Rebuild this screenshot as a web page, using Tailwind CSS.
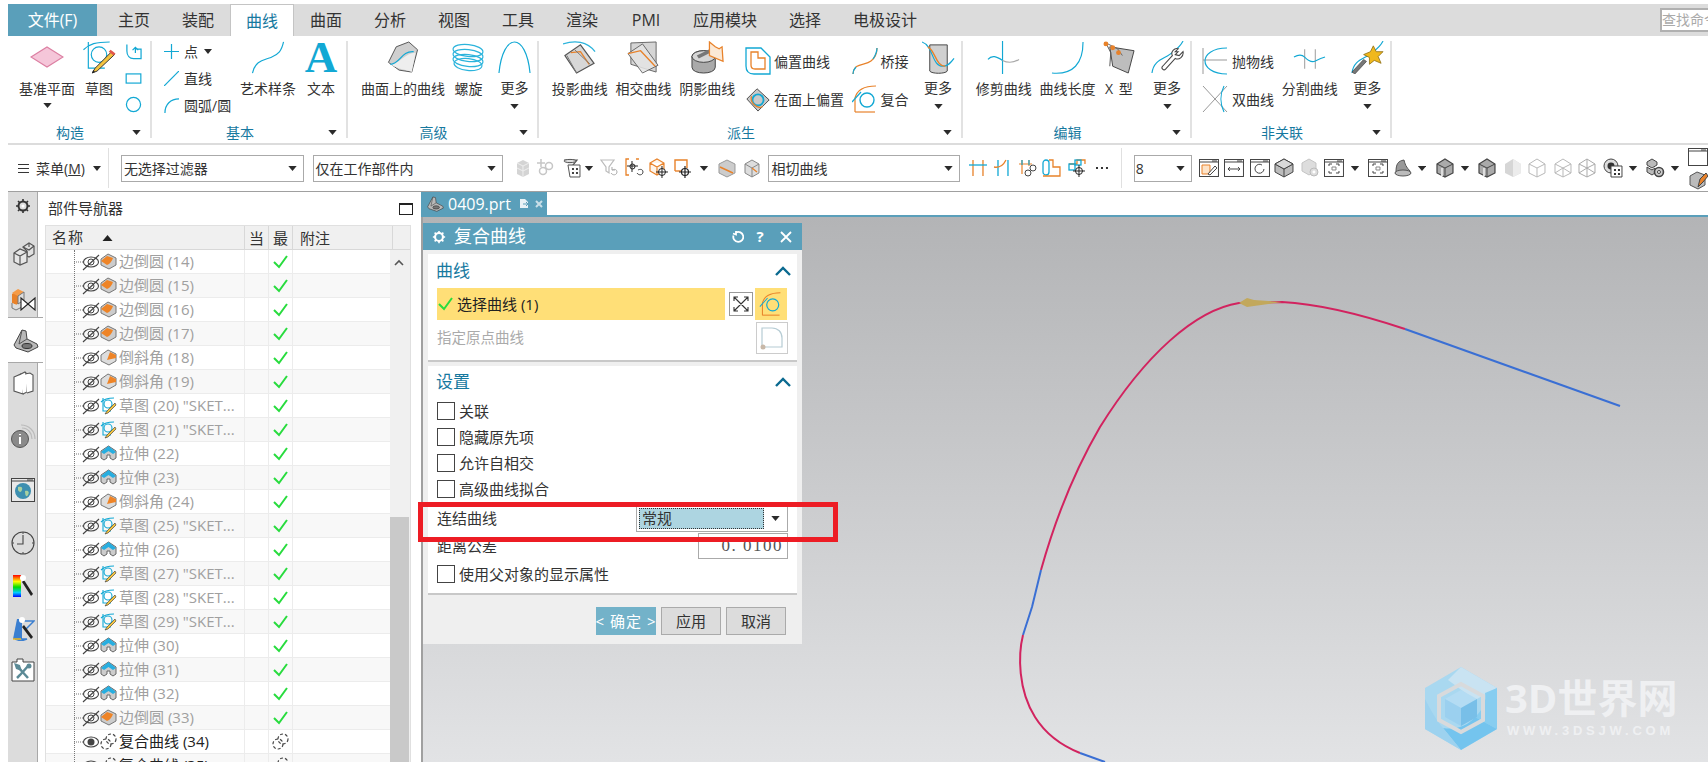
<!DOCTYPE html>
<html lang="zh">
<head>
<meta charset="UTF-8">
<title>复合曲线</title>
<script src="https://cdn.jsdelivr.net/npm/@tailwindcss/browser@4"></script>
</head>
<body class="font-['Open_Sans','Noto_Sans_CJK_SC',sans-serif] text-[#333]">

<!-- icon sheet -->
<svg class="absolute w-0 h-0">
  <defs><linearGradient id="rbw" x1="0" y1="0" x2="0" y2="1"><stop offset="0" stop-color="#f00"/><stop offset=".3" stop-color="#ff0"/><stop offset=".55" stop-color="#0d0"/><stop offset=".8" stop-color="#0cf"/><stop offset="1" stop-color="#00f"/></linearGradient></defs>
  <symbol id="caret" viewBox="0 0 10 6"><path d="M0 0h10L5 6z" fill="#2b2b2b"/></symbol>
  <symbol id="plane" viewBox="0 0 34 22"><path d="M1 11 17 1l16 10-16 10z" fill="#f5c6d9" stroke="#dc7fa2" stroke-width="1.2"/></symbol>
  <symbol id="sketch" viewBox="0 0 34 34"><g fill="none" stroke="#12a8d4" stroke-width="1.2"><path d="M1 9C7 3 14 1 28 1"/><path d="M6 1v27h17"/><circle cx="17" cy="14" r="8"/></g><path d="M30 11 13 28l-3 5 5-2 18-17z" fill="#f4c33f" stroke="#333" stroke-width="1"/><path d="m29 9 5 4-2 2-5-4z" fill="#e2574c"/><path d="m10 33 1-3 2 2z" fill="#222"/></symbol>
  <symbol id="chamfer-sm" viewBox="0 0 18 18"><g fill="none" stroke="#12a8d4" stroke-width="1.3"><path d="M2 1v7c0 5 3 8 7 8h8V6h-5"/><path d="m8 7 3-3 3 3M11 4v6"/></g></symbol>
  <symbol id="rect" viewBox="0 0 18 12"><rect x="1" y="1" width="16" height="10" fill="none" stroke="#12a8d4" stroke-width="1.3"/></symbol>
  <symbol id="circle" viewBox="0 0 18 18"><circle cx="9" cy="9" r="7.5" fill="none" stroke="#12a8d4" stroke-width="1.3"/></symbol>
  <symbol id="plus" viewBox="0 0 16 16"><path d="M8 0v16M0 8h16" stroke="#12a8d4" stroke-width="1.3"/></symbol>
  <symbol id="line" viewBox="0 0 16 16"><path d="M0 16 16 0" stroke="#12a8d4" stroke-width="1.3"/></symbol>
  <symbol id="arc" viewBox="0 0 16 16"><path d="M1 16C1 7 7 1 16 1" fill="none" stroke="#12a8d4" stroke-width="1.3"/></symbol>
  <symbol id="spline" viewBox="0 0 34 34"><path d="M1 33C4 20 12 20 20 17S31 10 33 1" fill="none" stroke="#12a8d4" stroke-width="1.2"/></symbol>
  <symbol id="surf-curve" viewBox="0 0 32 34"><path d="M9 6 22 1l9 8-6 23-13-2-11-8z" fill="#cfcfcf" stroke="#555"/><path d="M3 24c9 6 16 5 22 8l4-20C18 12 12 24 3 24z" fill="#eee"/><path d="M3 24c10 0 11-14 24-13" fill="none" stroke="#12a8d4" stroke-width="1.3"/></symbol>
  <symbol id="helix" viewBox="0 0 32 32"><g fill="none" stroke="#2cb4dc" stroke-width="1.2"><ellipse cx="16" cy="9" rx="15" ry="6" transform="rotate(6 16 9)"/><ellipse cx="16" cy="14" rx="15" ry="6" transform="rotate(6 16 14)"/><ellipse cx="16" cy="19" rx="15" ry="6" transform="rotate(6 16 19)"/><ellipse cx="16" cy="23" rx="14" ry="6" transform="rotate(6 16 23)"/></g></symbol>
  <symbol id="parab" viewBox="0 0 34 34"><path d="M1 33C3 12 10 1 17 1s14 11 16 32" fill="none" stroke="#12a8d4" stroke-width="1.2"/></symbol>
  <symbol id="project" viewBox="0 0 34 34"><path d="M0 3c12-4 25-3 33 8" fill="none" stroke="#2cb4dc" stroke-width="1.3"/><path d="M2 15 18 4l14 19-18 10z" fill="#d7d7d7" stroke="#555" stroke-width="1.2"/><path d="M8 12 18 11l9 13" fill="none" stroke="#e8822a" stroke-width="1.4"/><path d="m4 15 10 18M12 9l16 15" stroke="#777" fill="none"/></symbol>
  <symbol id="intersect" viewBox="0 0 34 34"><path d="M4 2 30 1v31L4 24z" fill="#d5d5d5" stroke="#666"/><path d="M1 13 16 3l16 22-16 8z" fill="#e5e5e5" stroke="#555" opacity=".85"/><path d="M1 13 14 10l15 16" fill="none" stroke="#e8822a" stroke-width="1.4"/></symbol>
  <symbol id="shadow" viewBox="0 0 34 34"><ellipse cx="13" cy="16" rx="12" ry="6" fill="#cfcfcf" stroke="#444"/><path d="M1 16v11c0 8 24 8 24 0V16" fill="#aaa" stroke="#444"/><ellipse cx="13" cy="16" rx="12" ry="6" fill="#d6d6d6" stroke="#444"/><path d="m6 15 14-7 2 3-14 7z" fill="#777"/><path d="M19 9V1l6 5 4 2 3-2 1 15-14-6z" fill="#fbe9d6" stroke="#e8822a" stroke-width="1.3"/></symbol>
  <symbol id="offset" viewBox="0 0 26 28"><g fill="none" stroke-width="1.3"><path d="M1 1h15l9 9v17H9c-5 0-8-3-8-8z" stroke="#12a8d4"/><path d="M6 5h7l0 6 7 0v11H10c-3 0-4-1-4-4z" stroke="#e8822a"/></g></symbol>
  <symbol id="offset-face" viewBox="0 0 26 28"><path d="M1 14 12 3l13 12-12 12z" fill="#c9c9c9" stroke="#444"/><circle cx="13" cy="15" r="6" fill="none" stroke="#12a8d4" stroke-width="2"/><path d="M6 11c-2 6 6 15 12 11" fill="none" stroke="#e8822a" stroke-width="1.4"/></symbol>
  <symbol id="bridge" viewBox="0 0 26 28"><path d="M1 27c1-12 12-8 18-13 4-3 6-8 6-13" fill="none" stroke="#e8822a" stroke-width="1.2"/><path d="M1 27c0-3 1-5 3-7M21 12c2-3 4-7 4-11" fill="none" stroke="#12a8d4" stroke-width="1.2"/></symbol>
  <symbol id="composite" viewBox="0 0 26 28"><g fill="none" stroke-width="1.2"><path d="M3 27V13C5 5 13 1 24 1" stroke="#e8822a"/><path d="M3 27h20" stroke="#e8822a"/><path d="M0 17 9 7" stroke="#12a8d4"/><circle cx="15" cy="15" r="7" stroke="#12a8d4" stroke-width="1.4"/></g></symbol>
  <symbol id="more-derive" viewBox="0 0 34 34"><path d="M8 4h18v27c-2 3-16 3-18 0z" fill="#d0d0d0" stroke="#444"/><path d="M0 1c12 4 10 26 22 25 5 0 8-4 11-8" fill="none" stroke="#12a8d4" stroke-width="1.2"/><path d="M6 6c8 4 8 20 18 20" fill="none" stroke="#e8822a" stroke-width="1.4"/></symbol>
  <symbol id="trim" viewBox="0 0 34 34"><path d="M16 0v34" stroke="#12a8d4" stroke-width="1.2"/><path d="M1 19c4-5 9-3 15 1" fill="none" stroke="#12a8d4" stroke-width="1.2"/><path d="M16 20c6 3 12 2 17-1" fill="none" stroke="#aaa" stroke-width="1.2"/></symbol>
  <symbol id="length" viewBox="0 0 34 34"><path d="M1 33c22 2 32-10 32-32" fill="none" stroke="#12a8d4" stroke-width="1.2"/></symbol>
  <symbol id="xtype" viewBox="0 0 34 34"><path d="M7 6 32 10 26 33 10 26z" fill="#bdbdbd" stroke="#444"/><path d="M3 2 8 12 7 26" fill="none" stroke="#555"/><path d="m3 2 12 6 5 7" fill="none" stroke="#666"/><circle cx="3" cy="3" r="2.5" fill="#e8822a"/><circle cx="10" cy="7" r="2.5" fill="#e8822a"/><circle cx="16" cy="12" r="2.5" fill="#e8822a"/></symbol>
  <symbol id="wrench" viewBox="0 0 34 34"><path d="M1 33c2-15 14-14 22-22 4-3 8-7 10-11" fill="none" stroke="#12a8d4" stroke-width="1.2"/><path d="m28 11-3 3 4 1 4-4c1 5-4 9-8 7L15 29c-2 2-5-1-3-3l10-11c-2-4 2-8 6-7l-3 3z" fill="#fff" stroke="#444" stroke-width="1.1"/></symbol>
  <symbol id="parabola" viewBox="0 0 26 28"><path d="M1 1v26" stroke="#999"/><path d="M1 13h24" stroke="#999"/><path d="M25 1C10 1 3 8 3 14s7 13 22 13" fill="none" stroke="#12a8d4" stroke-width="1.2"/></symbol>
  <symbol id="hyperbola" viewBox="0 0 26 28"><path d="m1 1 24 26M1 27 25 1" stroke="#999"/><path d="M22 1c-4 8-4 18 0 26" fill="none" stroke="#12a8d4" stroke-width="1.2"/></symbol>
  <symbol id="split" viewBox="0 0 34 20"><path d="M12 0v20M23 0v20" stroke="#aaa" stroke-width="1.2"/><path d="M1 8c5-3 8-3 11 0s7 6 11 4 6-3 10-4" fill="none" stroke="#12a8d4" stroke-width="1.2"/></symbol>
  <symbol id="wand" viewBox="0 0 34 34"><path d="M1 33c2-15 14-14 22-22 4-3 8-7 10-11" fill="none" stroke="#12a8d4" stroke-width="1.2"/><path d="m23 5 3 6 7 0-5 5 3 7-7-3-5 4 0-7-6-3 7-3z" fill="#f0b81d" stroke="#8a6a10" stroke-width=".8"/><path d="m16 21-3-2-12 13 3 2z" fill="#777" stroke="#333" stroke-width=".6"/></symbol>

  <symbol id="t-gcube" viewBox="0 0 20 20"><path d="M4 5 10 2l6 3v11l-6 3-6-3z" fill="#d4d4d4"/><path d="m4 5 6 3 6-3M10 8v11M4 10l6 3 6-3" fill="none" stroke="#eee"/></symbol>
  <symbol id="t-glink" viewBox="0 0 20 20"><g fill="none" stroke="#c6c6c6" stroke-width="1.5"><circle cx="7" cy="13" r="3.5"/><circle cx="13" cy="8" r="3.5"/><path d="M5 1v8M1 5h8"/></g></symbol>
  <symbol id="t-filter" viewBox="0 0 20 20"><path d="M2 2h13l-4 5v6" fill="#eee" stroke="#555" stroke-width="1.2"/><ellipse cx="8" cy="3" rx="6" ry="1.6" fill="#ddd" stroke="#555"/><path d="M6 7h12v12H8z" fill="#fff" stroke="#555"/><path d="M10 10h2v2h-2zm4 0h2v2h-2zm-4 4h2v2h-2zm4 0h2v2h-2z" fill="#444"/></symbol>
  <symbol id="t-filter2" viewBox="0 0 20 20"><path d="M2 2h13L10 9v6L7 13V9z" fill="#fff" stroke="#bbb" stroke-width="1.2"/><path d="M12 15c2 3 6 2 6-1s-3-3-5-2m0 0v-3m0 3h3" fill="none" stroke="#aaa"/></symbol>
  <symbol id="t-snap1" viewBox="0 0 20 20"><path d="M4 1H1v16h3M11 1h3" fill="none" stroke="#e8822a" stroke-width="1.3"/><path d="M7 3v11M2 8h11" stroke="#222"/><circle cx="7.500" cy="8.500" r="2.500" fill="none" stroke="#222"/><path d="M12 15c2 3 6 2 6-1s-3-3-5-2" fill="none" stroke="#444"/></symbol>
  <symbol id="t-snap2" viewBox="0 0 20 20"><path d="m1 5 7-4 7 4v8l-7 4-7-4zM1 5l7 4 7-4M8 9v8" fill="#fdf4ea" stroke="#e8822a" stroke-width="1.2"/><circle cx="13" cy="14" r="3.500" fill="#fff" stroke="#222"/><path d="M13 8v12M7 14h12" stroke="#222"/></symbol>
  <symbol id="t-snap3" viewBox="0 0 20 20"><path d="M2 13V2h12v8" fill="none" stroke="#e8822a" stroke-width="1.4"/><path d="M2 13h6" stroke="#e8822a" stroke-width="1.4"/><circle cx="12" cy="14" r="3.500" fill="none" stroke="#222" stroke-width="1.2"/><path d="M12 8v12M6 14h12" stroke="#222" stroke-width="1.2"/></symbol>
  <symbol id="t-cubeor" viewBox="0 0 20 20"><path d="m2 6 8-4 8 4v9l-8 4-8-4z" fill="#ccc" stroke="#999"/><path d="m3 9 13 6" stroke="#e8822a" stroke-width="1.5"/></symbol>
  <symbol id="t-cubewf" viewBox="0 0 20 20"><path d="m3 6 7-4 7 4v9l-7 4-7-4z" fill="#ddd" stroke="#888"/><path d="m3 6 7 4 7-4M10 10v9" fill="none" stroke="#888"/><path d="m10 10 5 4" stroke="#e8822a" stroke-width="1.3"/></symbol>
  <symbol id="t-ts1" viewBox="0 0 20 20"><path d="M5 2v16M15 2v16" stroke="#e8822a" stroke-width="1.3"/><path d="M1 7h18" stroke="#12a8d4" stroke-width="1.3"/></symbol>
  <symbol id="t-ts2" viewBox="0 0 20 20"><path d="M5 2v16M15 2v16" stroke="#12a8d4" stroke-width="1.3"/><path d="M1 9c5 1 9-1 12-7" fill="none" stroke="#e8822a" stroke-width="1.3"/></symbol>
  <symbol id="t-ts3" viewBox="0 0 20 20"><path d="M4 2v14M11 2v6M1 6h13" fill="none" stroke="#e8822a" stroke-width="1.2"/><path d="M4 2v5M11 2v5" stroke="#12a8d4" stroke-width="1.2"/><circle cx="10" cy="15" r="3" fill="none" stroke="#444"/><circle cx="15" cy="10" r="3" fill="none" stroke="#444"/></symbol>
  <symbol id="t-ts4" viewBox="0 0 20 20"><rect x="1" y="2" width="6" height="15" rx="3" fill="none" stroke="#12a8d4" stroke-width="1.3"/><path d="M7 2h4v7h7v9H1" fill="none" stroke="#e8822a" stroke-width="1.3"/></symbol>
  <symbol id="t-ts5" viewBox="0 0 20 20"><path d="M1 6h8V2h8v4" fill="none" stroke="#e8822a" stroke-width="1.3"/><rect x="7" y="2" width="6" height="5" fill="none" stroke="#12a8d4" stroke-width="1.3"/><rect x="1" y="6" width="6" height="6" fill="none" stroke="#12a8d4" stroke-width="1.3"/><circle cx="11" cy="13" r="3.500" fill="none" stroke="#222"/><path d="M11 7v12M5 13h12" stroke="#222"/></symbol>
  <symbol id="v-win1" viewBox="0 0 20 20"><rect x=".5" y="1.500" width="19" height="17" fill="#fff" stroke="#444"/><path d="M.5 4h19M13 3h5" stroke="#444"/><path d="M3 7h8v9H3z" fill="#fde3c8" stroke="#e8822a"/><path d="m9 16 7-8 2 2-7 7z" fill="#fff" stroke="#444"/></symbol>
  <symbol id="v-win2" viewBox="0 0 20 20"><rect x=".5" y="1.500" width="19" height="17" fill="#fff" stroke="#444"/><path d="M.5 4h19M13 3h5M4 11h12M4 11l2-2M4 11l2 2M16 11l-2-2M16 11l-2 2" fill="none" stroke="#444"/></symbol>
  <symbol id="v-win3" viewBox="0 0 20 20"><rect x=".5" y="1.500" width="19" height="17" fill="#fff" stroke="#444"/><path d="M.5 4h19M13 3h5M14 11a4.500 4.500 0 1 1-2-4" fill="none" stroke="#444"/></symbol>
  <symbol id="v-cube" viewBox="0 0 20 20"><path d="m1 6 9-5 9 5v8l-9 5-9-5z" fill="#bcbcbc" stroke="#444"/><path d="m1 6 9 5 9-5M10 11v8" fill="none" stroke="#444"/><path d="m1 6 9-5 9 5-9 5z" fill="#d8d8d8" stroke="#444"/></symbol>
  <symbol id="v-gray" viewBox="0 0 20 20"><path d="m2 5 7-4 7 4v8l-7 4-7-4z" fill="#ddd" stroke="#c4c4c4"/><circle cx="14" cy="14" r="4" fill="#ddd" stroke="#bbb"/><circle cx="14" cy="14" r="1.500" fill="#fff"/></symbol>
  <symbol id="v-fit" viewBox="0 0 20 20"><rect x=".5" y="1.500" width="19" height="17" fill="#fff" stroke="#444"/><path d="M.5 4h19M13 3h5M5 8V6h3M15 8V6h-3M5 13v2h3M15 13v2h-3" fill="none" stroke="#444"/><path d="M8 9h4v3H8z" fill="none" stroke="#888"/></symbol>
  <symbol id="v-shade" viewBox="0 0 20 20"><path d="M4 14C4 6 6 3 12 2c1 4 2 7 6 11v3H4z" fill="#999" stroke="#555"/><ellipse cx="11" cy="15" rx="8" ry="3" fill="#bbb" stroke="#555"/></symbol>
  <symbol id="v-cyl" viewBox="0 0 20 20"><path d="m2 6 8-5 8 5v9l-8 4-8-4z" fill="#aaa" stroke="#444" stroke-width="1.2"/><path d="m2 6 8 4 8-4M10 10v9" fill="none" stroke="#444"/><path d="M7 10v8" stroke="#ddd" stroke-width="2"/></symbol>
  <symbol id="v-smooth" viewBox="0 0 20 20"><path d="m2 6 8-5 8 5v9l-8 4-8-4z" fill="#d6d6d6"/><path d="m10 1 8 5v9l-8 4z" fill="#ececec"/></symbol>
  <symbol id="v-wire1" viewBox="0 0 20 20"><path d="m2 6 8-5 8 5v9l-8 4-8-4zM2 6l8 4 8-4M10 10v9" fill="#fff" stroke="#b8b8b8"/></symbol>
  <symbol id="v-wire2" viewBox="0 0 20 20"><path d="m2 6 8-5 8 5v9l-8 4-8-4zM2 6l8 4 8-4M10 10v9M2 15l8-5 8 5" fill="#fff" stroke="#b8b8b8"/></symbol>
  <symbol id="v-wire3" viewBox="0 0 20 20"><path d="m2 6 8-5 8 5v9l-8 4-8-4zM2 6l8 4 8-4M10 10v9M2 15l8-5 8 5M10 1v9" fill="#fff" stroke="#aaa"/></symbol>
  <symbol id="v-eyes" viewBox="0 0 20 20"><circle cx="8" cy="8" r="7" fill="#ddd" stroke="#444"/><circle cx="8" cy="8" r="3.500" fill="#333"/><path d="M8 8h11v11H8z" fill="#fff" stroke="#444"/><path d="M11 11h2v2h-2zm4 0h2v2h-2zm-4 4h2v2h-2zm4 0h2v2h-2z" fill="#333"/></symbol>
  <symbol id="v-gear" viewBox="0 0 20 20"><path d="m2 4 5-3 5 3v3l-5 3-5-3zM2 9l5 3 3-2v5l-3 2-5-3z" fill="#bbb" stroke="#444"/><circle cx="14" cy="14" r="4.500" fill="#ccc" stroke="#444" stroke-width="1.600"/><circle cx="14" cy="14" r="1.500" fill="#fff" stroke="#444"/></symbol>
  <symbol id="v-win0" viewBox="0 0 20 20"><rect x=".5" y="1.500" width="19" height="17" fill="#fff" stroke="#444"/><path d="M.5 4h19M13 3h5" stroke="#444"/></symbol>
  <symbol id="v-pen" viewBox="0 0 20 20"><path d="m2 6 7-4 8 3v10l-7 4-8-4z" fill="#bbb" stroke="#555"/><path d="m10 17 2-8 6-6 2 3-5 6z" fill="#e8822a" stroke="#444"/></symbol>

  <symbol id="r-gear" viewBox="0 0 16 16"><circle cx="8" cy="8" r="4.500" fill="none" stroke="#333" stroke-width="2"/><circle cx="8" cy="8" r="1.500" fill="#fff"/><path d="M8 1v2M8 13v2M1 8h2M13 8h2M3 3l1.500 1.500M11.500 11.500 13 13M3 13l1.500-1.500M11.500 4.500 13 3" stroke="#333" stroke-width="1.600"/></symbol>
  <symbol id="r-parts" viewBox="0 0 24 24"><path d="M12 5 18 1l5 3v8l-5 3-2-1V9z" fill="#e0e0e0" stroke="#555" stroke-width="1.200"/><path d="M3 11 9 7l7 3v10l-7 3-6-3z" fill="#e6e6e6" stroke="#555" stroke-width="1.200"/><path d="m3 11 6 3 7-4M9 14v9M18 1v4M12 5l6 3 5-4" fill="none" stroke="#555" stroke-width="1.200"/></symbol>
  <symbol id="r-asm" viewBox="0 0 26 26"><path d="M2 9 9 5v13l-3 2-4-2z" fill="#e8822a"/><path d="m2 8 6-4 6 3-6 4z" fill="#f59b47"/><path d="m8 11 6-4v8l-6 4z" fill="#ddd" stroke="#777"/><path d="M2 18v5l4 2 6-3" fill="#ddd" stroke="#777"/><path d="M11 13v12l14-12v12z" fill="#fff" stroke="#222" stroke-width="1.100"/></symbol>
  <symbol id="r-part" viewBox="0 0 26 26"><path d="M1 18 9 3l4 1 1 8 10 5 1 3-10 5-12-4z" fill="#b8b8b8" stroke="#444"/><path d="m9 3-3 14 8-5" fill="none" stroke="#555"/><ellipse cx="14" cy="19" rx="5" ry="2.500" fill="#777" stroke="#333"/></symbol>
  <symbol id="r-books" viewBox="0 0 24 24"><path d="M3 6 10 3l2 2v18l-9-3z" fill="#fff" stroke="#555" stroke-width="1.100"/><path d="m8 4 6-3 2 2v18l-4 2" fill="#fff" stroke="#555" stroke-width="1.100"/><path d="m14 3 5-1 3 2v16l-6 2" fill="#fff" stroke="#555" stroke-width="1.100"/></symbol>
  <symbol id="r-info" viewBox="0 0 26 26"><circle cx="10" cy="16" r="8.500" fill="#8a8a8a" stroke="#555"/><path d="M10 11v1M10 14v7" stroke="#fff" stroke-width="2"/><path d="M11 2c8 0 14 6 14 14M12 5c6 0 10 5 10 11" fill="none" stroke="#bbb" stroke-width="1.200"/></symbol>
  <symbol id="r-globe" viewBox="0 0 24 24"><rect x=".5" y=".5" width="23" height="23" fill="#e9e9e9" stroke="#444"/><path d="M.5 3h23M16 2h6" stroke="#444"/><circle cx="12" cy="13" r="8" fill="#3d8fb0"/><path d="M7 9c3-1 5 0 4 3s-3 2-4 0zM14 13c3-1 5 1 3 4s-3 0-3-4z" fill="#a8d0a0"/></symbol>
  <symbol id="r-clock" viewBox="0 0 24 24"><circle cx="12" cy="12" r="11" fill="none" stroke="#444" stroke-width="1.100"/><path d="M12 4v9H6" fill="none" stroke="#444" stroke-width="1.100"/><path d="M12 1v2M12 21v2M1 12h2M21 12h2" stroke="#444"/></symbol>
  <symbol id="r-tint" viewBox="0 0 24 24"><rect x="2" y="1" width="8" height="22" fill="url(#rbw)"/><path d="m13 6 9 14-2 2-9-14z" fill="#222"/><circle cx="12" cy="4" r="3" fill="#fff"/></symbol>
  <symbol id="r-mesh" viewBox="0 0 24 24"><path d="M2 22 6 2h5v20z" fill="#3b7fd0"/><path d="M4 22h12l-6 2zM11 4h12l-8 8" fill="none" stroke="#3b7fd0" stroke-width="1.500"/><path d="m13 8 9 12-2 2-9-12z" fill="#222"/><circle cx="11" cy="3" r="3" fill="#fff"/><path d="M2 22h8" stroke="#f0b81d" stroke-width="1.500"/></symbol>
  <symbol id="r-tools" viewBox="0 0 24 24"><path d="M1 4h5V1h6v3h11v19H1z" fill="#fff" stroke="#444"/><path d="m7 9 10 11" stroke="#5b8a96" stroke-width="2.500"/><path d="m5 7 3 1 1 3-3-1zM18 7l-9 10-3 3" fill="none" stroke="#5b8a96" stroke-width="2.500"/><circle cx="18" cy="8" r="2.500" fill="#5b8a96"/></symbol>

  <symbol id="eye-off" viewBox="0 0 26 18"><path d="M0 9h9" stroke="#777" stroke-dasharray="1 1"/><ellipse cx="17" cy="9" rx="7.500" ry="5" fill="none" stroke="#444" stroke-width="1.100"/><circle cx="17" cy="9" r="3" fill="none" stroke="#444"/><path d="M9 17 25 2" stroke="#444" stroke-width="1.100"/></symbol>
  <symbol id="eye-on" viewBox="0 0 26 18"><path d="M0 9h9" stroke="#777" stroke-dasharray="1 1"/><ellipse cx="17" cy="9" rx="7.500" ry="5" fill="none" stroke="#444" stroke-width="1.100"/><circle cx="17" cy="9" r="3.500" fill="#444"/></symbol>
  <symbol id="fillet" viewBox="0 0 17 17"><path d="m1 6 7-5 8 4v7l-7 4-8-4z" fill="#ccc" stroke="#777"/><path d="m1 8 6-5 6 2c-1 3-3 6-6 7z" fill="#ee8427"/></symbol>
  <symbol id="chamfer" viewBox="0 0 17 17"><path d="m1 6 7-5 8 4v7l-7 4-8-4z" fill="#ddd" stroke="#777"/><path d="m7 11 3-8 6 3v3z" fill="#ee8427"/></symbol>
  <symbol id="mini-sketch" viewBox="0 0 17 18"><g fill="none" stroke="#12a8d4" stroke-width="1.100"><path d="M1 5c3-3 6-4 13-4"/><path d="M3 1v13h8"/><circle cx="8" cy="7" r="4"/></g><path d="m15 6-8 8-2 3 3-1 8-8z" fill="#f4c33f" stroke="#333" stroke-width=".6"/></symbol>
  <symbol id="extrude" viewBox="0 0 17 17"><path d="m1 6 7.500-5L16 6v7l-3 2-3-2v-3H7v3l-3 2-3-2z" fill="#ccc" stroke="#666"/><path d="m1 7 7.500-6L16 7l-3 2-4.500-3L4 9z" fill="#27aee0"/></symbol>
  <symbol id="broken" viewBox="0 0 17 17"><g fill="none" stroke="#444" stroke-width="1.200" stroke-dasharray="3 2"><circle cx="6" cy="11" r="5"/><circle cx="11" cy="6" r="5"/></g></symbol>
  <symbol id="ok" viewBox="0 0 15 14"><path d="m1 7 5 5L14 1" fill="none" stroke="#28dc3e" stroke-width="2"/></symbol>
  <symbol id="chev" viewBox="0 0 16 10"><path d="m1 9 7-7 7 7" fill="none" stroke="#0b6a90" stroke-width="2.400"/></symbol>
</svg>

<div class="relative w-[1708px] h-[762px] overflow-hidden bg-white flex flex-col">

  <!-- tabs -->
  <div class="flex h-[32px] mt-[4px] ml-[8px] bg-[#dcdcdc] text-[16px] shrink-0">
    <div class="w-[89px] bg-[#5a9fba] text-white flex items-center justify-center">文件(F)</div>
    <div class="w-[5px]"></div>
    <div class="w-[64px] flex items-center justify-center">主页</div>
    <div class="w-[64px] flex items-center justify-center">装配</div>
    <div class="w-[64px] flex items-center justify-center bg-white border-t border-x border-[#c4c4c4] text-[#17799f]">曲线</div>
    <div class="w-[64px] flex items-center justify-center">曲面</div>
    <div class="w-[64px] flex items-center justify-center">分析</div>
    <div class="w-[64px] flex items-center justify-center">视图</div>
    <div class="w-[64px] flex items-center justify-center">工具</div>
    <div class="w-[64px] flex items-center justify-center">渲染</div>
    <div class="w-[64px] flex items-center justify-center">PMI</div>
    <div class="w-[94px] flex items-center justify-center">应用模块</div>
    <div class="w-[66px] flex items-center justify-center">选择</div>
    <div class="w-[94px] flex items-center justify-center">电极设计</div>
    <div class="ml-auto mt-[4px] w-[48px] h-[24px] bg-white border-2 border-r-0 border-[#b0b0b0] text-[#aaa] text-[14px] leading-[20px] whitespace-nowrap overflow-hidden">查找命令</div>
  </div>

  <!-- ribbon -->
  <div class="flex h-[109px] ml-[8px] pt-[5px] border-b-2 border-[#dcdcdc] shrink-0 text-[14px]">

    <div class="w-[144px] h-[97px] flex flex-col border-r-2 border-[#e2e2e2]">
      <div class="h-[86px] shrink-0 flex pl-[7px]">
        <div class="w-[64px] flex flex-col items-center"><svg class="w-[34px] h-[22px] mt-[5px] mb-[5px]"><use href="#plane"/></svg><span class="mt-[6px] h-[20px] leading-[20px]">基准平面</span><svg class="w-[9px] h-[5px] mt-[4px]"><use href="#caret"/></svg></div>
        <div class="w-[40px] flex flex-col items-center"><svg class="w-[34px] h-[33px]"><use href="#sketch"/></svg><span class="mt-[5px] h-[20px] leading-[20px]">草图</span></div>
        <div class="w-[28px] flex flex-col items-center pt-[2px]"><svg class="w-[17px] h-[18px]"><use href="#chamfer-sm"/></svg><svg class="w-[17px] h-[11px] mt-[12px]"><use href="#rect"/></svg><svg class="w-[17px] h-[17px] mt-[12px]"><use href="#circle"/></svg></div>
      </div>
      <div class="h-[11px] flex items-center"><span class="flex-1 text-center text-[#17799f] leading-none">构造</span><svg class="w-[9px] h-[5px] mr-[9px]"><use href="#caret"/></svg></div>
    </div>

    <div class="w-[196px] h-[97px] flex flex-col border-r-2 border-[#e2e2e2]">
      <div class="h-[86px] shrink-0 flex">
        <div class="w-[84px] pl-[12px] -mt-[3px] flex flex-col">
          <div class="h-[27px] flex items-center"><svg class="w-[15px] h-[15px]"><use href="#plus"/></svg><span class="ml-[5px]">点</span><svg class="w-[8px] h-[5px] ml-[6px]"><use href="#caret"/></svg></div>
          <div class="h-[27px] flex items-center"><svg class="w-[15px] h-[15px]"><use href="#line"/></svg><span class="ml-[5px]">直线</span></div>
          <div class="h-[27px] flex items-center"><svg class="w-[15px] h-[15px]"><use href="#arc"/></svg><span class="ml-[5px]">圆弧/圆</span></div>
        </div>
        <div class="w-[64px] flex flex-col items-center"><svg class="w-[34px] h-[33px]"><use href="#spline"/></svg><span class="mt-[5px] h-[20px] leading-[20px]">艺术样条</span></div>
        <div class="w-[42px] flex flex-col items-center"><span class="h-[33px] text-[45px] leading-[33px] font-bold font-['Liberation_Serif'] text-[#12a8d4]">A</span><span class="mt-[5px] h-[20px] leading-[20px]">文本</span></div>
      </div>
      <div class="h-[11px] flex items-center"><span class="flex-1 text-center text-[#17799f] leading-none">基本</span><svg class="w-[9px] h-[5px] mr-[9px]"><use href="#caret"/></svg></div>
    </div>

    <div class="w-[191px] h-[97px] flex flex-col border-r-2 border-[#e2e2e2]">
      <div class="h-[86px] shrink-0 flex pl-[13px]">
        <div class="w-[84px] flex flex-col items-center"><svg class="w-[32px] h-[33px]"><use href="#surf-curve"/></svg><span class="mt-[5px] h-[20px] leading-[20px] whitespace-nowrap">曲面上的曲线</span></div>
        <div class="w-[48px] flex flex-col items-center"><svg class="w-[32px] h-[33px]"><use href="#helix"/></svg><span class="mt-[5px] h-[20px] leading-[20px]">螺旋</span></div>
        <div class="w-[46px] flex flex-col items-center"><svg class="w-[33px] h-[33px]"><use href="#parab"/></svg><span class="mt-[4px] h-[20px] leading-[20px]">更多</span><svg class="w-[9px] h-[5px] mt-[6px]"><use href="#caret"/></svg></div>
      </div>
      <div class="h-[11px] flex items-center"><span class="flex-1 text-center text-[#17799f] leading-none">高级</span><svg class="w-[9px] h-[5px] mr-[9px]"><use href="#caret"/></svg></div>
    </div>

    <div class="w-[424px] h-[97px] flex flex-col border-r-2 border-[#e2e2e2]">
      <div class="h-[86px] shrink-0 flex pl-[9px]">
        <div class="w-[64px] flex flex-col items-center"><svg class="w-[33px] h-[33px]"><use href="#project"/></svg><span class="mt-[5px] h-[20px] leading-[20px]">投影曲线</span></div>
        <div class="w-[64px] flex flex-col items-center"><svg class="w-[33px] h-[33px]"><use href="#intersect"/></svg><span class="mt-[5px] h-[20px] leading-[20px]">相交曲线</span></div>
        <div class="w-[64px] flex flex-col items-center"><svg class="w-[33px] h-[33px]"><use href="#shadow"/></svg><span class="mt-[5px] h-[20px] leading-[20px]">阴影曲线</span></div>
        <div class="w-[110px] pl-[6px] pt-[4px] flex flex-col">
          <div class="h-[32px] flex items-center"><svg class="w-[26px] h-[28px]"><use href="#offset"/></svg><span class="ml-[3px] whitespace-nowrap">偏置曲线</span></div>
          <div class="h-[28px] mt-[8px] flex items-center"><svg class="w-[26px] h-[26px]"><use href="#offset-face"/></svg><span class="ml-[3px] whitespace-nowrap">在面上偏置</span></div>
        </div>
        <div class="w-[67px] pl-[3px] pt-[4px] flex flex-col">
          <div class="h-[32px] flex items-center"><svg class="w-[26px] h-[28px]"><use href="#bridge"/></svg><span class="ml-[3px]">桥接</span></div>
          <div class="h-[28px] mt-[8px] flex items-center"><svg class="w-[26px] h-[28px]"><use href="#composite"/></svg><span class="ml-[3px]">复合</span></div>
        </div>
        <div class="w-[46px] flex flex-col items-center"><svg class="w-[33px] h-[33px]"><use href="#more-derive"/></svg><span class="mt-[4px] h-[20px] leading-[20px]">更多</span><svg class="w-[9px] h-[5px] mt-[6px]"><use href="#caret"/></svg></div>
      </div>
      <div class="h-[11px] flex items-center"><span class="flex-1 text-center text-[#17799f] leading-none">派生</span><svg class="w-[9px] h-[5px] mr-[9px]"><use href="#caret"/></svg></div>
    </div>

    <div class="w-[229px] h-[97px] flex flex-col border-r-2 border-[#e2e2e2]">
      <div class="h-[86px] shrink-0 flex pl-[9px]">
        <div class="w-[64px] flex flex-col items-center"><svg class="w-[33px] h-[33px]"><use href="#trim"/></svg><span class="mt-[5px] h-[20px] leading-[20px]">修剪曲线</span></div>
        <div class="w-[64px] flex flex-col items-center"><svg class="w-[33px] h-[33px]"><use href="#length"/></svg><span class="mt-[5px] h-[20px] leading-[20px]">曲线长度</span></div>
        <div class="w-[40px] flex flex-col items-center"><svg class="w-[33px] h-[33px]"><use href="#xtype"/></svg><span class="mt-[5px] h-[20px] leading-[20px] whitespace-nowrap tracking-[1px]">X 型</span></div>
        <div class="w-[46px] ml-[5px] flex flex-col items-center"><svg class="w-[33px] h-[33px]"><use href="#wrench"/></svg><span class="mt-[4px] h-[20px] leading-[20px]">更多</span><svg class="w-[9px] h-[5px] mt-[6px]"><use href="#caret"/></svg></div>
      </div>
      <div class="h-[11px] flex items-center"><span class="flex-1 text-center text-[#17799f] leading-none">编辑</span><svg class="w-[9px] h-[5px] mr-[9px]"><use href="#caret"/></svg></div>
    </div>

    <div class="w-[200px] h-[97px] flex flex-col border-r-2 border-[#e2e2e2]">
      <div class="h-[86px] shrink-0 flex pl-[10px]">
        <div class="w-[77px] pt-[4px] flex flex-col">
          <div class="h-[32px] flex items-center"><svg class="w-[26px] h-[28px]"><use href="#parabola"/></svg><span class="ml-[4px] whitespace-nowrap">抛物线</span></div>
          <div class="h-[28px] mt-[8px] flex items-center"><svg class="w-[26px] h-[28px]"><use href="#hyperbola"/></svg><span class="ml-[4px] whitespace-nowrap">双曲线</span></div>
        </div>
        <div class="w-[64px] flex flex-col items-center"><svg class="w-[33px] h-[20px] mt-[8px] mb-[5px]"><use href="#split"/></svg><span class="mt-[5px] h-[20px] leading-[20px]">分割曲线</span></div>
        <div class="w-[46px] ml-[3px] flex flex-col items-center"><svg class="w-[33px] h-[33px]"><use href="#wand"/></svg><span class="mt-[4px] h-[20px] leading-[20px]">更多</span><svg class="w-[9px] h-[5px] mt-[6px]"><use href="#caret"/></svg></div>
      </div>
      <div class="h-[11px] flex items-center"><span class="flex-1 text-center text-[#17799f] leading-none">非关联</span><svg class="w-[9px] h-[5px] mr-[9px]"><use href="#caret"/></svg></div>
    </div>
  </div>

  <!-- selection toolbar -->
  <div class="flex items-center h-[46px] shrink-0 text-[14px] whitespace-nowrap">
    <svg class="w-[11px] h-[9px] ml-[18px]" viewBox="0 0 11 9"><path d="M0 .5h11M0 4.500h11M0 8.500h11" stroke="#333"/></svg>
    <span class="ml-[7px] w-[52px]">菜单(<u>M</u>)</span>
    <svg class="w-[8px] h-[5px] ml-[5px]"><use href="#caret"/></svg>
    <div class="ml-[7px] w-[1px] h-[40px] bg-[#e0e0e0]"></div>
    <div class="ml-[12px] w-[183px] h-[27px] border border-[#aaa] flex items-center justify-between pl-[2px] pr-[6px]"><span>无选择过滤器</span><svg class="w-[9px] h-[5px]"><use href="#caret"/></svg></div>
    <div class="ml-[9px] w-[191px] h-[27px] border border-[#aaa] flex items-center justify-between pl-[2px] pr-[6px]"><span>仅在工作部件内</span><svg class="w-[9px] h-[5px]"><use href="#caret"/></svg></div>
    <svg class="w-[20px] h-[20px] ml-[9.5px]"><use href="#t-gcube"/></svg>
    <svg class="w-[20px] h-[20px] ml-[3px]"><use href="#t-glink"/></svg>
    <svg class="w-[20px] h-[20px] ml-[6.5px]"><use href="#t-filter"/></svg>
    <svg class="w-[10px] h-[5px] ml-[1.5px]"><use href="#caret"/></svg>
    <svg class="w-[20px] h-[20px] ml-[5px]"><use href="#t-filter2"/></svg>
    <svg class="w-[20px] h-[20px] ml-[6px]"><use href="#t-snap1"/></svg>
    <svg class="w-[20px] h-[20px] ml-[4px]"><use href="#t-snap2"/></svg>
    <svg class="w-[20px] h-[20px] ml-[4px]"><use href="#t-snap3"/></svg>
    <svg class="w-[10px] h-[5px] ml-[7px]"><use href="#caret"/></svg>
    <svg class="w-[20px] h-[20px] ml-[7.5px]"><use href="#t-cubeor"/></svg>
    <svg class="w-[20px] h-[20px] ml-[5.5px]"><use href="#t-cubewf"/></svg>
    <div class="ml-[6px] w-[192px] h-[27px] border border-[#aaa] flex items-center justify-between pl-[2px] pr-[6px]"><span>相切曲线</span><svg class="w-[9px] h-[5px]"><use href="#caret"/></svg></div>
    <svg class="w-[20px] h-[20px] ml-[8px]"><use href="#t-ts1"/></svg>
    <svg class="w-[20px] h-[20px] ml-[5px]"><use href="#t-ts2"/></svg>
    <svg class="w-[20px] h-[20px] ml-[5px]"><use href="#t-ts3"/></svg>
    <svg class="w-[20px] h-[20px] ml-[4px]"><use href="#t-ts4"/></svg>
    <svg class="w-[20px] h-[20px] ml-[6px]"><use href="#t-ts5"/></svg>
    <svg class="w-[14px] h-[4px] ml-[7px]" viewBox="0 0 14 4"><path d="M1 1h2v2H1zm5 0h2v2H6zm5 0h2v2h-2z" fill="#333"/></svg>
    <div class="ml-[12px] w-[1px] h-[40px] bg-[#e0e0e0]"></div>
    <div class="ml-[12px] w-[58px] h-[27px] border border-[#aaa] flex items-center justify-between pl-[1px] pr-[6px]"><span>8</span><svg class="w-[9px] h-[5px]"><use href="#caret"/></svg></div>
    <svg class="w-[20px] h-[20px] ml-[7px]"><use href="#v-win1"/></svg>
    <svg class="w-[20px] h-[20px] ml-[5px]"><use href="#v-win2"/></svg>
    <svg class="w-[20px] h-[20px] ml-[6px]"><use href="#v-win3"/></svg>
    <svg class="w-[20px] h-[20px] ml-[4px]"><use href="#v-cube"/></svg>
    <svg class="w-[20px] h-[20px] ml-[6px]"><use href="#v-gray"/></svg>
    <svg class="w-[20px] h-[20px] ml-[4px]"><use href="#v-fit"/></svg>
    <svg class="w-[10px] h-[5px] ml-[6px]"><use href="#caret"/></svg>
    <svg class="w-[20px] h-[20px] ml-[8px]"><use href="#v-fit"/></svg>
    <svg class="w-[20px] h-[20px] ml-[4px]"><use href="#v-shade"/></svg>
    <svg class="w-[10px] h-[5px] ml-[5px]"><use href="#caret"/></svg>
    <svg class="w-[20px] h-[20px] ml-[9px]"><use href="#v-cyl"/></svg>
    <svg class="w-[10px] h-[5px] ml-[5px]"><use href="#caret"/></svg>
    <svg class="w-[20px] h-[20px] ml-[7px]"><use href="#v-cyl"/></svg>
    <svg class="w-[20px] h-[20px] ml-[6px]"><use href="#v-smooth"/></svg>
    <svg class="w-[20px] h-[20px] ml-[4px]"><use href="#v-wire1"/></svg>
    <svg class="w-[20px] h-[20px] ml-[6px]"><use href="#v-wire2"/></svg>
    <svg class="w-[20px] h-[20px] ml-[4px]"><use href="#v-wire3"/></svg>
    <svg class="w-[20px] h-[20px] ml-[6px]"><use href="#v-eyes"/></svg>
    <svg class="w-[10px] h-[5px] ml-[5px]"><use href="#caret"/></svg>
    <svg class="w-[20px] h-[20px] ml-[7px]"><use href="#v-gear"/></svg>
    <svg class="w-[10px] h-[5px] ml-[5px]"><use href="#caret"/></svg>
    <div class="ml-[8px] w-[20px] shrink-0 flex flex-col gap-[3px]"><svg class="w-[20px] h-[20px]"><use href="#v-win0"/></svg><svg class="w-[20px] h-[20px]"><use href="#v-pen"/></svg></div>
  </div>

  <!-- workspace -->
  <div class="flex flex-1 min-h-0 ml-[8px] border-t border-[#a0a0a0]">

    <!-- resource bar -->
    <div class="w-[30px] shrink-0 bg-[#dcdcdc] border-r border-[#a8a8a8] flex flex-col items-center relative">
      <svg class="w-[16px] h-[16px] mt-[6px]"><use href="#r-gear"/></svg>
      <svg class="w-[24px] h-[24px] mt-[28px]"><use href="#r-parts"/></svg>
      <svg class="w-[26px] h-[26px] mt-[19px]"><use href="#r-asm"/></svg>
      <div class="mt-[6px] w-[35px] h-[46px] self-start bg-white border-y border-[#a8a8a8] flex items-center justify-center z-10"><svg class="w-[26px] h-[26px]"><use href="#r-part"/></svg></div>
      <svg class="w-[24px] h-[24px] mt-[8px]"><use href="#r-books"/></svg>
      <svg class="w-[26px] h-[26px] mt-[28px]"><use href="#r-info"/></svg>
      <svg class="w-[24px] h-[24px] mt-[29px]"><use href="#r-globe"/></svg>
      <svg class="w-[24px] h-[24px] mt-[29px]"><use href="#r-clock"/></svg>
      <svg class="w-[24px] h-[24px] mt-[19px]"><use href="#r-tint"/></svg>
      <svg class="w-[24px] h-[24px] mt-[19px]"><use href="#r-mesh"/></svg>
      <svg class="w-[24px] h-[24px] mt-[17px]"><use href="#r-tools"/></svg>
    </div>

    <!-- part navigator -->
    <div class="w-[380px] shrink-0 pl-[7px] flex flex-col min-h-0">
      <div class="h-[33px] flex items-center pl-[3px] text-[15px] shrink-0"><span>部件导航器</span><span class="ml-auto mr-[5px] w-[14px] h-[12px] border border-[#222] border-t-2"></span></div>
      <div class="w-[366px] flex-1 min-h-0 flex flex-col border border-b-0 border-[#e0e0e0] text-[15px]">
        <div class="flex h-[24px] shrink-0 bg-[#f0f0f0] border-b border-[#d8d8d8]">
          <div class="w-[199px] border-r border-[#d8d8d8] flex items-center pl-[6px] tracking-[1px]">名称<svg class="w-[11px] h-[6px] ml-[18px]" viewBox="0 0 10 6"><path d="M0 6h10L5 0z" fill="#222"/></svg></div>
          <div class="w-[24px] border-r border-[#d8d8d8] text-center leading-[24px]">当</div>
          <div class="w-[24px] border-r border-[#d8d8d8] text-center leading-[24px] overflow-hidden">最</div>
          <div class="w-[100px] border-r border-[#d8d8d8] pl-[7px] leading-[24px]">附注</div>
        </div>
        <div class="flex flex-1 min-h-0">
          <div class="relative w-[344px] overflow-hidden">
            <div class="absolute left-[28px] top-0 bottom-0 border-l border-dotted border-[#777]"></div>
            <div class="flex h-[24px] odd:bg-[#f8f8f8] border-b border-[#ececec]"><div class="w-[199px] flex items-center pl-[28px] border-r border-[#ececec] text-[#a0a0a0]"><svg class="w-[26px] h-[18px]"><use href="#eye-off"/></svg><svg class="w-[17px] h-[17px]"><use href="#fillet"/></svg><span class="ml-[2px]">边倒圆 (14)</span></div><div class="w-[24px] border-r border-[#ececec]"></div><div class="w-[24px] border-r border-[#ececec] flex items-center justify-center"><svg class="w-[15px] h-[14px]"><use href="#ok"/></svg></div></div>
            <div class="flex h-[24px] odd:bg-[#f8f8f8] border-b border-[#ececec]"><div class="w-[199px] flex items-center pl-[28px] border-r border-[#ececec] text-[#a0a0a0]"><svg class="w-[26px] h-[18px]"><use href="#eye-off"/></svg><svg class="w-[17px] h-[17px]"><use href="#fillet"/></svg><span class="ml-[2px]">边倒圆 (15)</span></div><div class="w-[24px] border-r border-[#ececec]"></div><div class="w-[24px] border-r border-[#ececec] flex items-center justify-center"><svg class="w-[15px] h-[14px]"><use href="#ok"/></svg></div></div>
            <div class="flex h-[24px] odd:bg-[#f8f8f8] border-b border-[#ececec]"><div class="w-[199px] flex items-center pl-[28px] border-r border-[#ececec] text-[#a0a0a0]"><svg class="w-[26px] h-[18px]"><use href="#eye-off"/></svg><svg class="w-[17px] h-[17px]"><use href="#fillet"/></svg><span class="ml-[2px]">边倒圆 (16)</span></div><div class="w-[24px] border-r border-[#ececec]"></div><div class="w-[24px] border-r border-[#ececec] flex items-center justify-center"><svg class="w-[15px] h-[14px]"><use href="#ok"/></svg></div></div>
            <div class="flex h-[24px] odd:bg-[#f8f8f8] border-b border-[#ececec]"><div class="w-[199px] flex items-center pl-[28px] border-r border-[#ececec] text-[#a0a0a0]"><svg class="w-[26px] h-[18px]"><use href="#eye-off"/></svg><svg class="w-[17px] h-[17px]"><use href="#fillet"/></svg><span class="ml-[2px]">边倒圆 (17)</span></div><div class="w-[24px] border-r border-[#ececec]"></div><div class="w-[24px] border-r border-[#ececec] flex items-center justify-center"><svg class="w-[15px] h-[14px]"><use href="#ok"/></svg></div></div>
            <div class="flex h-[24px] odd:bg-[#f8f8f8] border-b border-[#ececec]"><div class="w-[199px] flex items-center pl-[28px] border-r border-[#ececec] text-[#a0a0a0]"><svg class="w-[26px] h-[18px]"><use href="#eye-off"/></svg><svg class="w-[17px] h-[17px]"><use href="#chamfer"/></svg><span class="ml-[2px]">倒斜角 (18)</span></div><div class="w-[24px] border-r border-[#ececec]"></div><div class="w-[24px] border-r border-[#ececec] flex items-center justify-center"><svg class="w-[15px] h-[14px]"><use href="#ok"/></svg></div></div>
            <div class="flex h-[24px] odd:bg-[#f8f8f8] border-b border-[#ececec]"><div class="w-[199px] flex items-center pl-[28px] border-r border-[#ececec] text-[#a0a0a0]"><svg class="w-[26px] h-[18px]"><use href="#eye-off"/></svg><svg class="w-[17px] h-[17px]"><use href="#chamfer"/></svg><span class="ml-[2px]">倒斜角 (19)</span></div><div class="w-[24px] border-r border-[#ececec]"></div><div class="w-[24px] border-r border-[#ececec] flex items-center justify-center"><svg class="w-[15px] h-[14px]"><use href="#ok"/></svg></div></div>
            <div class="flex h-[24px] odd:bg-[#f8f8f8] border-b border-[#ececec]"><div class="w-[199px] flex items-center pl-[28px] border-r border-[#ececec] text-[#a0a0a0]"><svg class="w-[26px] h-[18px]"><use href="#eye-off"/></svg><svg class="w-[17px] h-[18px]"><use href="#mini-sketch"/></svg><span class="ml-[2px] whitespace-nowrap">草图 (20) "SKET...</span></div><div class="w-[24px] border-r border-[#ececec]"></div><div class="w-[24px] border-r border-[#ececec] flex items-center justify-center"><svg class="w-[15px] h-[14px]"><use href="#ok"/></svg></div></div>
            <div class="flex h-[24px] odd:bg-[#f8f8f8] border-b border-[#ececec]"><div class="w-[199px] flex items-center pl-[28px] border-r border-[#ececec] text-[#a0a0a0]"><svg class="w-[26px] h-[18px]"><use href="#eye-off"/></svg><svg class="w-[17px] h-[18px]"><use href="#mini-sketch"/></svg><span class="ml-[2px] whitespace-nowrap">草图 (21) "SKET...</span></div><div class="w-[24px] border-r border-[#ececec]"></div><div class="w-[24px] border-r border-[#ececec] flex items-center justify-center"><svg class="w-[15px] h-[14px]"><use href="#ok"/></svg></div></div>
            <div class="flex h-[24px] odd:bg-[#f8f8f8] border-b border-[#ececec]"><div class="w-[199px] flex items-center pl-[28px] border-r border-[#ececec] text-[#a0a0a0]"><svg class="w-[26px] h-[18px]"><use href="#eye-off"/></svg><svg class="w-[17px] h-[17px]"><use href="#extrude"/></svg><span class="ml-[2px]">拉伸 (22)</span></div><div class="w-[24px] border-r border-[#ececec]"></div><div class="w-[24px] border-r border-[#ececec] flex items-center justify-center"><svg class="w-[15px] h-[14px]"><use href="#ok"/></svg></div></div>
            <div class="flex h-[24px] odd:bg-[#f8f8f8] border-b border-[#ececec]"><div class="w-[199px] flex items-center pl-[28px] border-r border-[#ececec] text-[#a0a0a0]"><svg class="w-[26px] h-[18px]"><use href="#eye-off"/></svg><svg class="w-[17px] h-[17px]"><use href="#extrude"/></svg><span class="ml-[2px]">拉伸 (23)</span></div><div class="w-[24px] border-r border-[#ececec]"></div><div class="w-[24px] border-r border-[#ececec] flex items-center justify-center"><svg class="w-[15px] h-[14px]"><use href="#ok"/></svg></div></div>
            <div class="flex h-[24px] odd:bg-[#f8f8f8] border-b border-[#ececec]"><div class="w-[199px] flex items-center pl-[28px] border-r border-[#ececec] text-[#a0a0a0]"><svg class="w-[26px] h-[18px]"><use href="#eye-off"/></svg><svg class="w-[17px] h-[17px]"><use href="#chamfer"/></svg><span class="ml-[2px]">倒斜角 (24)</span></div><div class="w-[24px] border-r border-[#ececec]"></div><div class="w-[24px] border-r border-[#ececec] flex items-center justify-center"><svg class="w-[15px] h-[14px]"><use href="#ok"/></svg></div></div>
            <div class="flex h-[24px] odd:bg-[#f8f8f8] border-b border-[#ececec]"><div class="w-[199px] flex items-center pl-[28px] border-r border-[#ececec] text-[#a0a0a0]"><svg class="w-[26px] h-[18px]"><use href="#eye-off"/></svg><svg class="w-[17px] h-[18px]"><use href="#mini-sketch"/></svg><span class="ml-[2px] whitespace-nowrap">草图 (25) "SKET...</span></div><div class="w-[24px] border-r border-[#ececec]"></div><div class="w-[24px] border-r border-[#ececec] flex items-center justify-center"><svg class="w-[15px] h-[14px]"><use href="#ok"/></svg></div></div>
            <div class="flex h-[24px] odd:bg-[#f8f8f8] border-b border-[#ececec]"><div class="w-[199px] flex items-center pl-[28px] border-r border-[#ececec] text-[#a0a0a0]"><svg class="w-[26px] h-[18px]"><use href="#eye-off"/></svg><svg class="w-[17px] h-[17px]"><use href="#extrude"/></svg><span class="ml-[2px]">拉伸 (26)</span></div><div class="w-[24px] border-r border-[#ececec]"></div><div class="w-[24px] border-r border-[#ececec] flex items-center justify-center"><svg class="w-[15px] h-[14px]"><use href="#ok"/></svg></div></div>
            <div class="flex h-[24px] odd:bg-[#f8f8f8] border-b border-[#ececec]"><div class="w-[199px] flex items-center pl-[28px] border-r border-[#ececec] text-[#a0a0a0]"><svg class="w-[26px] h-[18px]"><use href="#eye-off"/></svg><svg class="w-[17px] h-[18px]"><use href="#mini-sketch"/></svg><span class="ml-[2px] whitespace-nowrap">草图 (27) "SKET...</span></div><div class="w-[24px] border-r border-[#ececec]"></div><div class="w-[24px] border-r border-[#ececec] flex items-center justify-center"><svg class="w-[15px] h-[14px]"><use href="#ok"/></svg></div></div>
            <div class="flex h-[24px] odd:bg-[#f8f8f8] border-b border-[#ececec]"><div class="w-[199px] flex items-center pl-[28px] border-r border-[#ececec] text-[#a0a0a0]"><svg class="w-[26px] h-[18px]"><use href="#eye-off"/></svg><svg class="w-[17px] h-[18px]"><use href="#mini-sketch"/></svg><span class="ml-[2px] whitespace-nowrap">草图 (28) "SKET...</span></div><div class="w-[24px] border-r border-[#ececec]"></div><div class="w-[24px] border-r border-[#ececec] flex items-center justify-center"><svg class="w-[15px] h-[14px]"><use href="#ok"/></svg></div></div>
            <div class="flex h-[24px] odd:bg-[#f8f8f8] border-b border-[#ececec]"><div class="w-[199px] flex items-center pl-[28px] border-r border-[#ececec] text-[#a0a0a0]"><svg class="w-[26px] h-[18px]"><use href="#eye-off"/></svg><svg class="w-[17px] h-[18px]"><use href="#mini-sketch"/></svg><span class="ml-[2px] whitespace-nowrap">草图 (29) "SKET...</span></div><div class="w-[24px] border-r border-[#ececec]"></div><div class="w-[24px] border-r border-[#ececec] flex items-center justify-center"><svg class="w-[15px] h-[14px]"><use href="#ok"/></svg></div></div>
            <div class="flex h-[24px] odd:bg-[#f8f8f8] border-b border-[#ececec]"><div class="w-[199px] flex items-center pl-[28px] border-r border-[#ececec] text-[#a0a0a0]"><svg class="w-[26px] h-[18px]"><use href="#eye-off"/></svg><svg class="w-[17px] h-[17px]"><use href="#extrude"/></svg><span class="ml-[2px]">拉伸 (30)</span></div><div class="w-[24px] border-r border-[#ececec]"></div><div class="w-[24px] border-r border-[#ececec] flex items-center justify-center"><svg class="w-[15px] h-[14px]"><use href="#ok"/></svg></div></div>
            <div class="flex h-[24px] odd:bg-[#f8f8f8] border-b border-[#ececec]"><div class="w-[199px] flex items-center pl-[28px] border-r border-[#ececec] text-[#a0a0a0]"><svg class="w-[26px] h-[18px]"><use href="#eye-off"/></svg><svg class="w-[17px] h-[17px]"><use href="#extrude"/></svg><span class="ml-[2px]">拉伸 (31)</span></div><div class="w-[24px] border-r border-[#ececec]"></div><div class="w-[24px] border-r border-[#ececec] flex items-center justify-center"><svg class="w-[15px] h-[14px]"><use href="#ok"/></svg></div></div>
            <div class="flex h-[24px] odd:bg-[#f8f8f8] border-b border-[#ececec]"><div class="w-[199px] flex items-center pl-[28px] border-r border-[#ececec] text-[#a0a0a0]"><svg class="w-[26px] h-[18px]"><use href="#eye-off"/></svg><svg class="w-[17px] h-[17px]"><use href="#extrude"/></svg><span class="ml-[2px]">拉伸 (32)</span></div><div class="w-[24px] border-r border-[#ececec]"></div><div class="w-[24px] border-r border-[#ececec] flex items-center justify-center"><svg class="w-[15px] h-[14px]"><use href="#ok"/></svg></div></div>
            <div class="flex h-[24px] odd:bg-[#f8f8f8] border-b border-[#ececec]"><div class="w-[199px] flex items-center pl-[28px] border-r border-[#ececec] text-[#a0a0a0]"><svg class="w-[26px] h-[18px]"><use href="#eye-off"/></svg><svg class="w-[17px] h-[17px]"><use href="#fillet"/></svg><span class="ml-[2px]">边倒圆 (33)</span></div><div class="w-[24px] border-r border-[#ececec]"></div><div class="w-[24px] border-r border-[#ececec] flex items-center justify-center"><svg class="w-[15px] h-[14px]"><use href="#ok"/></svg></div></div>
            <div class="flex h-[24px] odd:bg-[#f8f8f8] border-b border-[#ececec]"><div class="w-[199px] flex items-center pl-[28px] border-r border-[#ececec] text-[#222]"><svg class="w-[26px] h-[18px]"><use href="#eye-on"/></svg><svg class="w-[17px] h-[17px]"><use href="#broken"/></svg><span class="ml-[2px]">复合曲线 (34)</span></div><div class="w-[24px] border-r border-[#ececec]"></div><div class="w-[24px] border-r border-[#ececec] flex items-center justify-center"><svg class="w-[17px] h-[17px]"><use href="#broken"/></svg></div></div>
            <div class="flex h-[24px] odd:bg-[#f8f8f8] border-b border-[#ececec]"><div class="w-[199px] flex items-center pl-[28px] border-r border-[#ececec] text-[#222]"><svg class="w-[26px] h-[18px]"><use href="#eye-on"/></svg><svg class="w-[17px] h-[17px]"><use href="#broken"/></svg><span class="ml-[2px]">复合曲线 (35)</span></div><div class="w-[24px] border-r border-[#ececec]"></div><div class="w-[24px] border-r border-[#ececec] flex items-center justify-center"><svg class="w-[17px] h-[17px]"><use href="#broken"/></svg></div></div>
          </div>
          <div class="w-[20px] bg-[#f0f0f0] flex flex-col">
            <svg class="w-[10px] h-[7px] mt-[9px] ml-[4px]" viewBox="0 0 10 7"><path d="m1 6 4-4 4 4" fill="none" stroke="#555" stroke-width="1.600"/></svg>
            <div class="mt-[251px] w-[19px] flex-1 bg-[#c9c9c9]"></div>
          </div>
        </div>
      </div>
    </div>

    <!-- graphics window -->
    <div class="flex-1 min-w-0 flex flex-col ml-[3px]">
      <div class="h-[25px] shrink-0 flex border-b-2 border-[#5a9fba]">
        <div class="w-[126px] bg-[#5a9fba] text-white text-[16px] flex items-center pl-[6px]">
          <svg class="w-[17px] h-[17px]"><use href="#r-part"/></svg><span class="ml-[4px]">0409.prt</span>
          <svg class="w-[10px] h-[11px] ml-[8px]" viewBox="0 0 10 11"><path d="M1 1h5l3 3v6H1z" fill="#e8f2f6"/><path d="M4 6h5M7 4l2 2-2 2" stroke="#5a9fba" fill="none"/></svg>
          <svg class="w-[8px] h-[8px] ml-[6px]" viewBox="0 0 8 8"><path d="m1 1 6 6M7 1 1 7" stroke="#c9dfe8" stroke-width="2"/></svg>
        </div>
      </div>
      <div class="flex-1 min-h-0 border-l-2 border-[#a0a0a0] bg-linear-to-b from-[#b3b4b6] to-[#e2e3e5] pt-[6px]">

        <!-- dialog -->
        <div class="w-[379px] flex flex-col bg-[#efefef]">
          <div class="h-[27px] bg-[#5a9fba] text-white flex items-center pl-[9px] pr-[10px]">
            <svg class="w-[14px] h-[14px]" viewBox="0 0 16 16"><circle cx="8" cy="8" r="4.500" fill="none" stroke="#fff" stroke-width="2.400"/><path d="M8 1v3M8 12v3M1 8h3M12 8h3M3 3l2 2M11 11l2 2M3 13l2-2M11 5l2-2" stroke="#fff" stroke-width="1.800"/></svg>
            <span class="ml-[8px] text-[18px]">复合曲线</span>
            <svg class="w-[12px] h-[12px] ml-auto" viewBox="0 0 12 12"><path d="M4 1.500a5 5 0 1 1-2.500 3M4 0v3.500L1 2.500" fill="none" stroke="#fff" stroke-width="1.800"/></svg>
            <span class="ml-[10px] w-[12px] text-center font-bold text-[15px]">?</span>
            <svg class="w-[12px] h-[12px] ml-[14px]" viewBox="0 0 12 12"><path d="m1 1 10 10M11 1 1 11" stroke="#fff" stroke-width="1.800"/></svg>
          </div>

          <div class="mx-[5px] mt-[4px] bg-white h-[108px] border-b-2 border-[#c8c8c8] flex flex-col">
            <div class="h-[34px] shrink-0 flex items-center pl-[8px] pr-[6px] text-[17px] text-[#17799f]"><span>曲线</span><svg class="w-[16px] h-[10px] ml-auto"><use href="#chev"/></svg></div>
            <div class="h-[32px] shrink-0 flex pl-[9px] text-[15px]">
              <div class="w-[288px] bg-[#ffdf77] flex items-center pl-[1px] text-[#222]"><svg class="w-[15px] h-[14px]"><use href="#ok"/></svg><span class="ml-[4px]">选择曲线 (1)</span></div>
              <div class="ml-[4px] mt-[4px] w-[24px] h-[24px] border border-[#999] flex items-center justify-center"><svg class="w-[16px] h-[16px]" viewBox="0 0 16 16"><path d="m1 1 14 14M15 1 1 15M1 5V1h4M15 11v4h-4M11 1h4v4M5 15H1v-4" fill="none" stroke="#333" stroke-width="1.100"/></svg></div>
              <div class="ml-[2px] w-[32px] h-[32px] bg-[#ffdf77] flex items-center justify-center"><svg class="w-[24px] h-[24px]"><use href="#composite"/></svg></div>
            </div>
            <div class="h-[32px] mt-[2px] shrink-0 flex items-center pl-[9px] text-[14.5px] text-[#aaa]"><span>指定原点曲线</span><div class="ml-auto mr-[9px] w-[32px] h-[32px] border border-[#ccc] flex items-center justify-center"><svg class="w-[24px] h-[24px]" viewBox="0 0 24 24"><path d="M2 2v19h20V12C22 6 18 2 12 2z" fill="none" stroke="#b6ccd4" stroke-width="1.200"/><circle cx="3" cy="21" r="2.500" fill="#c8b8a8"/></svg></div></div>
          </div>

          <div class="mx-[5px] mt-[4px] bg-white h-[229px] border-b-2 border-[#c8c8c8] flex flex-col text-[15px]">
            <div class="h-[32px] shrink-0 flex items-center pl-[8px] pr-[6px] text-[17px] text-[#17799f]"><span>设置</span><svg class="w-[16px] h-[10px] ml-auto"><use href="#chev"/></svg></div>
            <label class="h-[26px] shrink-0 flex items-center pl-[9px]"><span class="w-[18px] h-[18px] border border-[#444]"></span><span class="ml-[4px]">关联</span></label>
            <label class="h-[26px] shrink-0 flex items-center pl-[9px]"><span class="w-[18px] h-[18px] border border-[#444]"></span><span class="ml-[4px]">隐藏原先项</span></label>
            <label class="h-[26px] shrink-0 flex items-center pl-[9px]"><span class="w-[18px] h-[18px] border border-[#444]"></span><span class="ml-[4px]">允许自相交</span></label>
            <label class="h-[26px] shrink-0 flex items-center pl-[9px]"><span class="w-[18px] h-[18px] border border-[#444]"></span><span class="ml-[4px]">高级曲线拟合</span></label>
            <div class="h-[28px] mt-[2px] shrink-0 flex items-center pl-[9px] pr-[9px]"><span>连结曲线</span>
              <div class="ml-auto w-[152px] h-[27px] border border-[#aaa] flex items-center pl-[2px] pr-[7px]"><span class="w-[125px] h-[21px] bg-[#add5e1] border border-dotted border-[#333] pl-[2px] leading-[19px]">常规</span><svg class="w-[9px] h-[5px] ml-auto"><use href="#caret"/></svg></div>
            </div>
            <div class="h-[28px] shrink-0 flex items-center pl-[9px] pr-[9px]"><span>距离公差</span><div class="ml-auto w-[90px] h-[26px] border border-[#aaa] flex items-center justify-end pr-[4px] font-['Liberation_Serif'] text-[17px] tracking-[1.5px] text-[#555]">0. 0100</div></div>
            <label class="h-[28px] shrink-0 flex items-center pl-[9px]"><span class="w-[18px] h-[18px] border border-[#444]"></span><span class="ml-[4px]">使用父对象的显示属性</span></label>
          </div>

          <div class="flex justify-end gap-[5px] mt-[12px] mb-[9px] pr-[16px] text-[15px]">
            <div class="w-[60px] h-[28px] bg-[#73b2c9] text-white flex items-center justify-center whitespace-nowrap tracking-[1px]">&lt; 确定 &gt;</div>
            <div class="w-[60px] h-[28px] bg-[#dcdcdc] border border-[#aaa] flex items-center justify-center">应用</div>
            <div class="w-[60px] h-[28px] bg-[#dcdcdc] border border-[#aaa] flex items-center justify-center">取消</div>
          </div>
        </div>
      </div>
    </div>
  </div>

  <!-- annotation over the dialog -->
  <div class="absolute left-[418px] top-[502px] w-[420px] h-[40px] border-[5px] border-[#ed1c24]"></div>

  <!-- curve in the graphics window -->
  <svg class="absolute left-0 top-0 w-[1708px] h-[762px] pointer-events-none" viewBox="0 0 1708 762">
    <g fill="none" stroke-width="2" stroke-linejoin="round">
      <path d="M1620 406 1405 329" stroke="#3a6fd4"/>
      <path d="M1405 329C1360 314 1320 304 1282 302L1239 303C1195 310 1145 355 1100 427C1075 470 1055 520 1041 570" stroke="#d2235f"/>
      <path d="M1041 570 1032 607 1023 635" stroke="#3a6fd4"/>
      <path d="M1023 635C1018 655 1018 690 1035 717C1045 733 1060 745 1080 753" stroke="#d2235f"/>
      <path d="M1080 753 1105 762" stroke="#3a6fd4"/>
    </g>
    <path d="M1239 303 1247 298 1254 300 1282 302 1254 306 1247 307z" fill="#c2a85c"/>
    <!-- watermark mark -->
    <path d="M1461 667 1497 688v41l-36 21-36-21v-41z" fill="#a9d8f0"/>
    <path d="M1461 667 1497 688 1475 700 1448 680z" fill="#c9e3f2"/>
    <path d="M1497 688v41l-22-12c8-7 12-17 10-24z" fill="#87cdf0"/>
    <path d="M1497 729 1461 750l-18-22c14 2 24-2 32-11z" fill="#74c4ee"/>
    <path d="m1425 729 0-30c5 10 12 22 18 29l18 22z" fill="#9dd2ef"/>
    <path d="m1461 684 22 12v24l-22 12-22-12v-24z" fill="none" stroke="#d8dadc" stroke-width="4"/>
    <path d="m1461 690 16 9-16 9-16-9z" fill="#b4dcf3"/>
    <path d="m1445 699 16 9v18l-16-9z" fill="#9bd0ef"/>
    <path d="m1477 699-16 9v18l16-9z" fill="#78bfe8"/>
  </svg>
  <div class="absolute left-[1505px] top-[671px] text-[40px] leading-[54px] font-bold text-[#eff0f2] whitespace-nowrap">3D世界网</div>
  <div class="absolute left-[1507px] top-[723px] text-[13px] leading-[15px] font-bold font-['Liberation_Sans'] tracking-[3.800px] text-[#eff0f2] whitespace-nowrap">WWW.3DSJW.COM</div>
</div>
</body>
</html>
